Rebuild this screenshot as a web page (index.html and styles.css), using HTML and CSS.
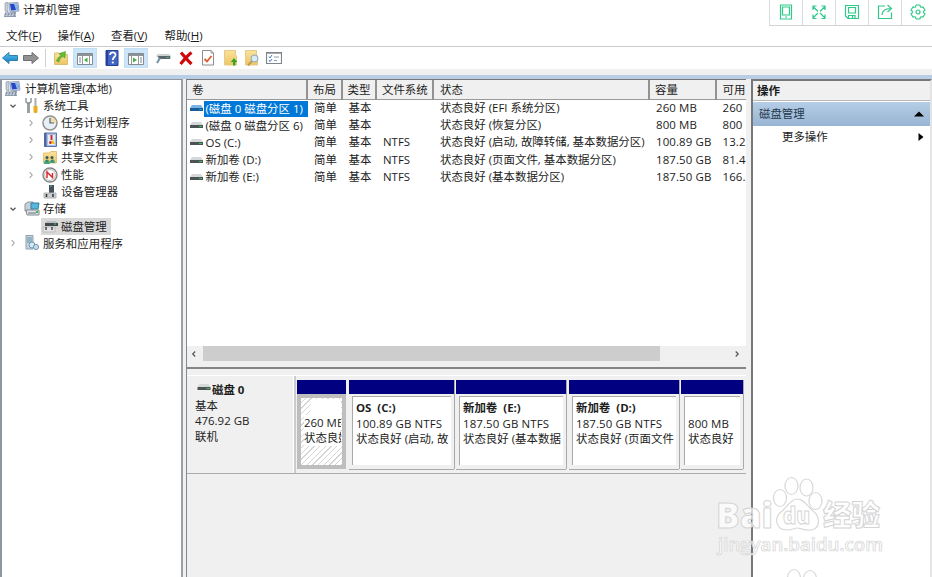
FILE: index.html
```html
<!DOCTYPE html>
<html lang="zh-CN">
<head>
<meta charset="utf-8">
<title>计算机管理</title>
<link rel="stylesheet" href="styles.css">
</head>
<body>
<svg class="defs" width="0" height="0">
  <defs>
    <linearGradient id="blue" x1="0" y1="0" x2="0" y2="1"><stop offset="0" stop-color="#58c5f5"/><stop offset="1" stop-color="#1478bd"/></linearGradient>
    <linearGradient id="folder" x1="0" y1="0" x2="0" y2="1"><stop offset="0" stop-color="#fbe29a"/><stop offset="1" stop-color="#edc564"/></linearGradient>
    <symbol id="computer" viewBox="0 0 16 16"><path d="M1 1L4 0V10L1 9Z" fill="#c7cfda" stroke="#8290a3" stroke-width=".6"/><path d="M5 1L14 .5L15 9L6 10Z" fill="#d7deed" stroke="#74829a" stroke-width=".7"/><path d="M6 2L13 1.7L14 8L7 8.5Z" fill="#2448c8"/><path d="M10 2L13 1.8L14 8L12 8.1Z" fill="#89b9ef"/><path d="M8 10H12V12H8Z" fill="#9aa5b5"/><path d="M1 10.5H11L12 15H0Z" fill="#8492a8"/><path d="M2 12H10M1.5 13.7H10.5" stroke="#dfe5ed" stroke-dasharray="2 1"/></symbol>
    <symbol id="drive" viewBox="0 0 13 7"><path d="M2 0H11L13 3H0Z" fill="#d5d7d9"/><path d="M0 3H13V6H0Z" fill="#4b5353"/><path d="M9 4H12V5H9Z" fill="#31bd63"/></symbol>
    <symbol id="drive-on" viewBox="0 0 13 7"><path d="M2 0H11L13 3H0Z" fill="#78b4e4"/><path d="M0 3H13V6H0Z" fill="#185c9b"/><path d="M9 4H12V5H9Z" fill="#16a1b0"/></symbol>
    <symbol id="open" viewBox="0 0 8 8"><path d="M1.5 2.7L4 5.2L6.5 2.7" fill="none" stroke="#555" stroke-width="1.3"/></symbol>
    <symbol id="closed" viewBox="0 0 8 8"><path d="M2.7 1.2L5.2 4L2.7 6.8" fill="none" stroke="#a5a5a5" stroke-width="1.1"/></symbol>
  </defs>
</svg>

<header class="titlebar">
  <svg class="app-icon" width="16" height="16"><use href="#computer"/></svg>
  <span>计算机管理</span>
</header>
<nav class="menu"><span>文件(<u>F</u>)</span><span>操作(<u>A</u>)</span><span>查看(<u>V</u>)</span><span>帮助(<u>H</u>)</span></nav>

<div class="toolbar">
  <svg viewBox="0 0 16 16"><path d="M.5 8L7 2.500V5.500H15.500V10.500H7V13.500Z" fill="url(#blue)" stroke="#327fae"/></svg>
  <svg viewBox="0 0 16 16"><path d="M15.500 8L9 2.500V5.500H.5V10.500H9V13.500Z" fill="#929292" stroke="#6f6f6f"/></svg>
  <i class="rule"></i>
  <svg viewBox="0 0 16 16"><path d="M1.500 3H6L8 4.500H14.500V14.500H1.500Z" fill="url(#folder)" stroke="#dcbd78"/><path d="M3.500 11C4.500 8 6 6.500 8 6L6 3.500L12.500 1.500L12 8L10 6.500C8 7.500 6.500 9 6 12Z" fill="#63bb36" stroke="#449823" stroke-width=".5"/></svg>
  <b><svg viewBox="0 0 16 16"><path d="M.5 3.500H15.500V14.500H.5Z" fill="#fff" stroke="#858b91"/><path d="M1 4H15V6H1Z" fill="#8c949b"/><path d="M5.500 6V14M12.500 6V14" stroke="#999"/><path d="M2 8H4M2 10H4M2 12H4" stroke="#789"/><path d="M10.500 7.500V12.500L7 10Z" fill="#4bac40"/></svg></b>
  <svg viewBox="0 0 16 16"><path d="M2 .5H14V15.500H2Z" fill="#4366c6" stroke="#253f91"/><path d="M2 .5H4V15.500H2Z" fill="#263f9b"/><path d="M6 5C6 1.500 12 1.600 11.500 5C11.300 7 8.800 7.200 8.800 10" fill="none" stroke="#fff" stroke-width="1.800"/><circle cx="8.800" cy="12.500" r="1.100" fill="#fff"/></svg>
  <b><svg viewBox="0 0 16 16"><path d="M.5 3.500H15.500V14.500H.5Z" fill="#fff" stroke="#858b91"/><path d="M1 4H15V6H1Z" fill="#8c949b"/><path d="M3.500 6V14M10.500 6V14" stroke="#999"/><path d="M12 8H14M12 10H14M12 12H14" stroke="#789"/><path d="M5 7.500V12.500L9 10Z" fill="#4bac40"/></svg></b>
  <svg viewBox="0 0 16 16"><path d="M3 4H14L16 6V9H4L1 6Z" fill="#ccd1d3"/><path d="M3 6H15V9H4Z" fill="#59646b"/><path d="M11 7H14V8H11Z" fill="#48b568"/><path d="M5 8L2 13" stroke="#7192a2" stroke-width="2"/></svg>
  <svg viewBox="0 0 16 16"><path d="M3 2.500C7 7 9 10 13.500 14M13.500 2.500C9 6 6 10 2.500 14" fill="none" stroke="#d0080b" stroke-width="3.200"/></svg>
  <svg viewBox="0 0 16 16"><path d="M2.500 .5H11L13.500 3V15H2.500Z" fill="#fff" stroke="#8d8d8d"/><path d="M11 0V3H14" fill="none" stroke="#999"/><path d="M4.500 9L7 11.500L11.500 6" fill="none" stroke="#e05b2e" stroke-width="1.800"/></svg>
  <svg viewBox="0 0 16 16"><path d="M1.500 .5H12.500V5L13.500 6V15H1.500Z" fill="url(#folder)" stroke="#e5cb89"/><path d="M10 15.500V12H7.800L11 8L14.400 12H12.300V15.500Z" fill="#35a522"/></svg>
  <svg viewBox="0 0 16 16"><path d="M1.500 .5H12.500V5L13.500 6V15H1.500Z" fill="url(#folder)" stroke="#e5cb89"/><path d="M8 11L4 15.500" stroke="#c59a54" stroke-width="2"/><circle cx="10.500" cy="8.500" r="3.500" fill="#d6edf7" stroke="#8ba4b3"/></svg>
  <svg viewBox="0 0 16 16"><path d="M.5 2.500H15.500V13.500H.5Z" fill="#fff" stroke="#7f858c" stroke-width="1.200"/><path d="M1 3.500H15" stroke="#aaa"/><path d="M3 6.500L4 8L6 5M3 10L4 11.500L6 9" fill="none" stroke="#4b78bc"/><path d="M8 7H13M8 10.500H11" stroke="#849fbd"/></svg>
</div>

<div class="quick">
  <span><svg viewBox="0 0 16 16"><path d="M2.500 1H13.500V15H2.500ZM4.500 3H11.500V11H4.500ZM7 13H9"/></svg></span>
  <span><svg viewBox="0 0 16 16"><path d="M2 2.500L7 7.500M14 2.500L9 7.500M2 14L7 9M14 14L9 9M2 6V2H5.500M10.500 2H14V6M2 10.500V14.500H5.500M10.500 14.500H14V10.500"/></svg></span>
  <span><svg viewBox="0 0 16 16"><path d="M1.500 1.500H14.500V14.500H4L1.500 12ZM4.500 3.500H11.500V9H4.500ZM4.500 14.500V11.500H11V14.500M8.500 12V14"/></svg></span>
  <span><svg viewBox="0 0 16 16"><path d="M8 2H1.500V14.500H14.500V8.500M5 11C5 7 8 4.500 13.500 4.500M10.500 1L14.500 4.500L10.500 8"/></svg></span>
  <span><svg viewBox="0 0 16 16"><path d="M6.200 1H9.800L10.600 3Q11.500 3.500 13 2.900L15 6Q13.500 7 13.500 8Q13.500 9 15 10L13 13.100Q11.500 12.500 10.600 13L9.800 15H6.200L5.400 13Q4.500 12.500 3 13.100L1 10Q2.500 9 2.500 8Q2.500 7 1 6L3 2.900Q4.500 3.500 5.400 3Z"/><circle cx="8" cy="8" r="2"/></svg></span>
</div>

<div class="band"></div>
<main class="workspace">
  <aside class="tree">
    <div class="node root"><svg class="ico" viewBox="0 0 16 16"><use href="#computer"/></svg><span>计算机管理(本地)</span></div>
    <div class="node l1"><svg class="tw"><use href="#open"/></svg><svg class="ico" viewBox="0 0 16 16"><path d="M4.500 4V15" stroke="#9ba0a2" stroke-width="3"/><path d="M2 0V4L4.500 6L7 4V0" fill="none" stroke="#91989b" stroke-width="1.500"/><path d="M11.500 0V9" stroke="#a8afb4" stroke-width="2"/><path d="M9.500 8H13.500V13C13.500 16 9.500 16 9.500 13Z" fill="#edab20"/></svg><span>系统工具</span></div>
    <div class="node l2"><svg class="tw"><use href="#closed"/></svg><svg class="ico" viewBox="0 0 16 16"><circle cx="8" cy="8" r="7" fill="#e8eff5" stroke="#929292" stroke-width="1.500"/><path d="M8 8V2A6 6 0 0 1 14 8Z" fill="#f3dfa2"/><path d="M8 3V8H12" fill="none" stroke="#4f6680" stroke-width="1.200"/></svg><span>任务计划程序</span></div>
    <div class="node l2"><svg class="tw"><use href="#closed"/></svg><svg class="ico" viewBox="0 0 16 16"><path d="M2.500 1H14.500V14.500H2.500Z" fill="#a9bee0" stroke="#5c75a8"/><path d="M3.500 1V15" stroke="#4a62a0" stroke-width="2"/><path d="M6 3H13V13H6Z" fill="#e1edf9"/><path d="M9.500 3V8" stroke="#d82822" stroke-width="2"/><circle cx="8.500" cy="10.500" r="1.500" fill="#d82822"/><path d="M11 7L13 12H9Z" fill="#edc438"/></svg><span>事件查看器</span></div>
    <div class="node l2"><svg class="tw"><use href="#closed"/></svg><svg class="ico" viewBox="0 0 16 16"><path d="M1.500 4H7L9 2.500H14.500V14H1.500Z" fill="url(#folder)" stroke="#e2c377"/><circle cx="5" cy="8.500" r="1.500" fill="#36555e"/><circle cx="10" cy="8.500" r="1.500" fill="#36555e"/><path d="M2 15C2 9 8 9 8 15M8 14C8 9 13 9 13 14" fill="#43a57f"/><path d="M5 11V13M10 11V13" stroke="#2d6a77"/></svg><span>共享文件夹</span></div>
    <div class="node l2"><svg class="tw"><use href="#closed"/></svg><svg class="ico" viewBox="0 0 16 16"><circle cx="8" cy="8" r="7" fill="#fff" stroke="#858585" stroke-width="1.400"/><circle cx="8" cy="8" r="5.400" fill="none" stroke="#bbb"/><path d="M5 11V5L10.500 10.500V6" fill="none" stroke="#dc292f" stroke-width="1.500"/></svg><span>性能</span></div>
    <div class="node l2"><i class="tw"></i><svg class="ico" viewBox="0 0 16 16"><path d="M7 1H12V9H7Z" fill="#47525a"/><path d="M8 2H10" stroke="#4dc188"/><path d="M2 9H14V14H2Z" fill="#c9ced1" stroke="#b0b4b7"/><path d="M4.500 10V13M11 10V13" stroke="#333" stroke-width="1.500"/></svg><span>设备管理器</span></div>
    <div class="node l1"><svg class="tw"><use href="#open"/></svg><svg class="ico" viewBox="0 0 16 16"><path d="M1 3L4 1H9V10H1Z" fill="#c7d0d7" stroke="#87939c"/><path d="M7 2H15L14 8H7Z" fill="#57b7dd" stroke="#347e9c"/><path d="M2 9H15V14H3Z" fill="#e2e6e8" stroke="#818990"/><path d="M4 12H12" stroke="#637078"/><path d="M12 11H14" stroke="#3bb651" stroke-width="2"/></svg><span>存储</span></div>
    <div class="node l2 current"><i class="tw"></i><svg class="ico" viewBox="0 0 16 16"><path d="M5 3H14L16 5H3Z" fill="#b9bec0"/><path d="M3 5H16V8H3Z" fill="#424a4d"/><path d="M12 6H14" stroke="#3ac96b"/><path d="M1 9H13V14H1Z" fill="#e5e5e5" stroke="#bbb"/><path d="M4 9V12M10 9V12" stroke="#444" stroke-width="1.500"/></svg><span>磁盘管理</span></div>
    <div class="node l1"><svg class="tw"><use href="#closed"/></svg><svg class="ico" viewBox="0 0 16 16"><path d="M2 .5H9V14H2Z" fill="#c5d4dd" stroke="#8da0ac"/><path d="M3 3H8M3 5H8M3 7H8" stroke="#6694aa"/><circle cx="8" cy="10" r="3" fill="#d6e8f3" stroke="#6d98b5"/><circle cx="12" cy="12" r="2.600" fill="#c9dcea" stroke="#6d98b5"/></svg><span>服务和应用程序</span></div>
  </aside>

  <section class="center">
    <div class="volumes">
      <div class="row head"><span>卷</span><span>布局</span><span>类型</span><span>文件系统</span><span>状态</span><span>容量</span><span>可用</span></div>
      <div class="row"><span class="name selected"><svg><use href="#drive-on"/></svg><em>(磁盘 0 磁盘分区 1)</em></span><span>简单</span><span>基本</span><span></span><span>状态良好 (EFI 系统分区)</span><span>260 MB</span><span>260</span></div>
      <div class="row"><span class="name"><svg><use href="#drive"/></svg><em>(磁盘 0 磁盘分区 6)</em></span><span>简单</span><span>基本</span><span></span><span>状态良好 (恢复分区)</span><span>800 MB</span><span>800</span></div>
      <div class="row"><span class="name"><svg><use href="#drive"/></svg><em>OS (C:)</em></span><span>简单</span><span>基本</span><span>NTFS</span><span>状态良好 (启动, 故障转储, 基本数据分区)</span><span>100.89 GB</span><span>13.2</span></div>
      <div class="row"><span class="name"><svg><use href="#drive"/></svg><em>新加卷 (D:)</em></span><span>简单</span><span>基本</span><span>NTFS</span><span>状态良好 (页面文件, 基本数据分区)</span><span>187.50 GB</span><span>81.4</span></div>
      <div class="row"><span class="name"><svg><use href="#drive"/></svg><em>新加卷 (E:)</em></span><span>简单</span><span>基本</span><span>NTFS</span><span>状态良好 (基本数据分区)</span><span>187.50 GB</span><span>166.</span></div>
      <div class="scroll"><svg viewBox="0 0 8 8"><path d="M5.200 1.500L2.700 4L5.200 6.500"/></svg><i></i><svg viewBox="0 0 8 8"><path d="M2.700 1.500L5.200 4L2.700 6.500"/></svg></div>
    </div>
    <div class="disk">
      <div class="disk-info"><strong><svg><use href="#drive"/></svg>磁盘 0</strong><span>基本</span><span>476.92 GB</span><span>联机</span></div>
      <div class="parts">
        <div class="part efi"><div class="box"><p></p><p>260 MB</p><p>状态良好</p></div></div>
        <div class="part"><div class="box"><p><strong>OS&nbsp; (C:)</strong></p><p class="size">100.89 GB NTFS</p><p>状态良好 (启动, 故</p></div></div>
        <div class="part"><div class="box"><p><strong>新加卷&nbsp; (E:)</strong></p><p class="size">187.50 GB NTFS</p><p>状态良好 (基本数据</p></div></div>
        <div class="part"><div class="box"><p><strong>新加卷&nbsp; (D:)</strong></p><p class="size">187.50 GB NTFS</p><p>状态良好 (页面文件</p></div></div>
        <div class="part"><div class="box"><p></p><p class="size">800 MB</p><p>状态良好</p></div></div>
      </div>
    </div>
  </section>

  <aside class="actions">
    <h2>操作</h2>
    <div class="group"><span>磁盘管理</span><svg width="10" height="6"><path d="M0 5.500L5 .5L10 5.500Z"/></svg></div>
    <div class="more"><span>更多操作</span><svg width="6" height="8"><path d="M.5 0L5.500 4L.5 8Z"/></svg></div>
  </aside>
</main>

<svg class="watermark" width="180" height="107" viewBox="0 0 180 107">
  <g fill="#fff" fill-opacity=".6" stroke="#d8d8d8" stroke-width="1.200">
    <ellipse cx="66" cy="28" rx="6.500" ry="8.500"/><ellipse cx="77.500" cy="16" rx="6.500" ry="8.500"/><ellipse cx="92.500" cy="17.500" rx="6.500" ry="8.500"/><ellipse cx="101.500" cy="31" rx="6.500" ry="8.500"/>
    <path d="M83 29C77 29 75 35 68 41C59 48 62 60 73 60C79 60 80 58 83 58C87 58 90 61 97 60C106 59 107 47 99 41C93 36 90 29 83 29Z"/>
    <ellipse cx="80" cy="108" rx="6.500" ry="8.500"/><ellipse cx="96" cy="109" rx="6.500" ry="8.500"/>
  </g>
  <g class="wm-text">
    <text x="2" y="58" font-size="36" textLength="57" lengthAdjust="spacingAndGlyphs">Bai</text>
    <text x="69" y="54" font-size="23" textLength="27" lengthAdjust="spacingAndGlyphs">du</text>
    <text x="109" y="56" font-size="29" textLength="57" lengthAdjust="spacingAndGlyphs">经验</text>
    <text class="url" x="4" y="81" font-size="17.500" textLength="165" lengthAdjust="spacingAndGlyphs">jingyan.baidu.com</text>
  </g>
</svg>
</body>
</html>
```
FILE: styles.css
```css
* { box-sizing: border-box; }
body {
  margin: 0;
  width: 932px;
  height: 577px;
  overflow: hidden;
  display: flex;
  flex-direction: column;
  position: relative;
  background: #fff;
  color: #1c1c1c;
  font: 11.45px/17.2px "Open Sans", "Noto Sans CJK SC", sans-serif;
  white-space: nowrap;
}
.defs { position: absolute; }
svg { display: block; flex: none; }

.titlebar { height: 20px; flex: none; display: flex; align-items: center; gap: 3px; padding-left: 4px; }
.menu { height: 27px; flex: none; display: flex; padding: 7px 0 0 6px; border-bottom: 1px solid #c9cacb; }
.menu span { width: 53.5px; }
.menu span:first-child { width: 51.5px; }
.menu u { text-underline-offset: 1px; }

.toolbar {
  height: 22px;
  flex: none;
  display: grid;
  grid-template-columns: 19px 24px 4px 28px 18px 36px 14px 40px 5px 39px 5px 39px 5px;
  grid-template-columns: 20px 22px 6px 25px 23px 31px 17px 38px 7px 37px 9px 34px 9px;
  align-items: center;
  justify-items: center;
}
.toolbar svg { width: 16px; height: 16px; }
.toolbar b { width: 24px; height: 20px; display: grid; place-items: center; background: #cce5f8; border: 1px solid #c2dff5; }
.toolbar .rule { width: 1px; height: 18px; background: #d0d0d0; }

.quick { position: absolute; top: 0; right: 0; width: 163px; height: 26px; display: flex; background: #fff; border-bottom: 1px solid #cfd5d5; }
.quick span { width: 33px; flex: none; display: grid; place-items: center; border-left: 1px solid #d9dddd; padding-bottom: 2px; }
.quick svg { width: 16px; height: 16px; fill: none; stroke: #2fc98a; stroke-width: 1.2; }

.band { height: 10px; flex: none; background: #f0f0f0; border-bottom: 4px solid #b8cee7; }

.workspace { flex: 1; min-height: 0; display: grid; grid-template-columns: 183px 565px 184px; background: #f0f0f0; }
.tree { background: #fff; border: 1px solid #8f969f; border-width: 1px 2px 0; border-right-color: #9ca1a7; }
.node { height: 17.2px; display: flex; align-items: center; }
.node .tw { width: 8px; height: 8px; margin-right: 10px; flex: none; }
.node .ico { width: 16px; height: 16px; margin-right: 3px; }
.node span { line-height: 17px; }
.root { padding-left: 3px; }
.root .ico { margin-right: 4px; }
.l1 { padding-left: 7px; }
.l1 .ico { margin-left: -3px; }
.l2 { padding-left: 25px; }
.l2 .ico { margin-left: -3px; }
.current { background: linear-gradient(#d9d9d9, #d9d9d9) 39px 0 / 70px 100% no-repeat; }

.center { margin-left: 3px; border-left: 1px solid #85898e; border-top: 1px solid #777; min-width: 0; width: 560px; }
.volumes { height: 289px; background: #fff; border-bottom: 2px solid #858585; display: flex; flex-direction: column; }
.row { height: 17.2px; flex: none; display: grid; grid-template-columns: 121px 34.5px 34.5px 57px 216px 67px 29px; }
.row > span { padding-left: 6px; line-height: 16px; }
.row > span:nth-child(n+6) { letter-spacing: .12px; }
.row > span:last-child { padding-left: 5.500px; }
.head { height: 20px; background: #f0f0f0; border-bottom: 1px solid #9a9a9a; }
.head > span { border-right: 2px solid #929292; line-height: 20px; padding-left: 5px; }
.head > span:nth-child(5) { padding-left: 6px; }
.head > span:last-child { border-right: 0; }
.row > .name { display: flex; align-items: center; padding-left: 3px; gap: 1px; }
.name svg { width: 13px; height: 7px; }
.name em { font-style: normal; padding: 0 1.500px; }
.selected em { background: #0078d7; color: #fff; flex: 1; }
.scroll { height: 15px; margin-top: auto; margin-bottom: 6px; background: #f0f0f0; display: flex; align-items: center; box-shadow: 0 6px #f0f0f0; }
.scroll svg { width: 8px; height: 8px; margin: 0 5px 0 3px; fill: none; stroke: #555; stroke-width: 1.2; }
.scroll i { width: 457px; height: 15px; background: #cdcdcd; }
.scroll svg:last-child { margin-left: auto; margin-right: 5px; }

.disk { height: 99px; margin-top: 6px; display: flex; border-top: 1px solid #fff; border-bottom: 1px solid #aaa; }
.disk-info { width: 109px; border-right: 2px solid #ccc; box-shadow: inset -1px 0 #fff; display: flex; flex-direction: column; padding: 6px 0 0 8px; line-height: 15.5px; }
.disk-info strong { display: flex; gap: 1px; padding-left: 2px; }
.disk-info svg { width: 14px; height: 7px; margin-top: 2px; }
.parts { display: flex; padding-top: 4px; margin-left: 1px; height: 93px; }
.part { border-top: 14px solid navy; background: #f0f0f0; padding: 2px 3px 4px; box-shadow: 1px 0 #aaa, 0 1px #aaa; }
.part:nth-child(1) { width: 49px; margin-right: 3px; }
.part:nth-child(2) { width: 105px; margin-right: 2px; }
.part:nth-child(3) { width: 110px; margin-right: 3px; }
.part:nth-child(4) { width: 110px; margin-right: 2px; }
.part:nth-child(5) { width: 62px; }
.box { height: 100%; overflow: hidden; background: #fff; border-top: 1px solid #aaa; border-left: 1px solid #aaa; padding: 3px 0 0 3px; line-height: 15.5px; }
.box p { margin: 0; height: 15.5px; overflow: hidden; }
.box .size { letter-spacing: .12px; }
.part.efi { padding: 0; box-shadow: none; }
.efi .box { border: 4px solid #bebebe; padding: 1px 1px 0 3px; background: repeating-linear-gradient(135deg, #fff 0 3px, #d5d5d5 3px 4px); }
.efi p { background: #fff; }
.efi p:first-child { margin-left: 7px; }

.actions { background: #fff; margin-left: 3px; border: 2px solid #777; border-right: 2px solid #e4e4e4; border-bottom: 0; }
.actions h2 { margin: 0; height: 20px; padding-left: 4px; font-size: 11.5px; line-height: 20px; background: #f0f0f0; border-bottom: 1px solid #b8b8b8; }
.group { height: 24px; margin-top: 1px; display: flex; align-items: center; justify-content: space-between; padding: 0 6px 0 6px; background: linear-gradient(#b5cde5, #98b5d3); color: #25384d; }
.more { height: 22px; display: flex; align-items: center; justify-content: space-between; padding: 0 6px 0 29px; }
.group svg, .more svg { fill: #000; }

.watermark { position: absolute; left: 714px; top: 470px; }
.wm-text { font-family: "Open Sans", "Noto Sans CJK SC", sans-serif; font-weight: 800; fill: #fff; fill-opacity: .7; stroke: #d4d4d4; stroke-width: 1; }
.url { font-weight: 600; stroke-width: .7; }
```
